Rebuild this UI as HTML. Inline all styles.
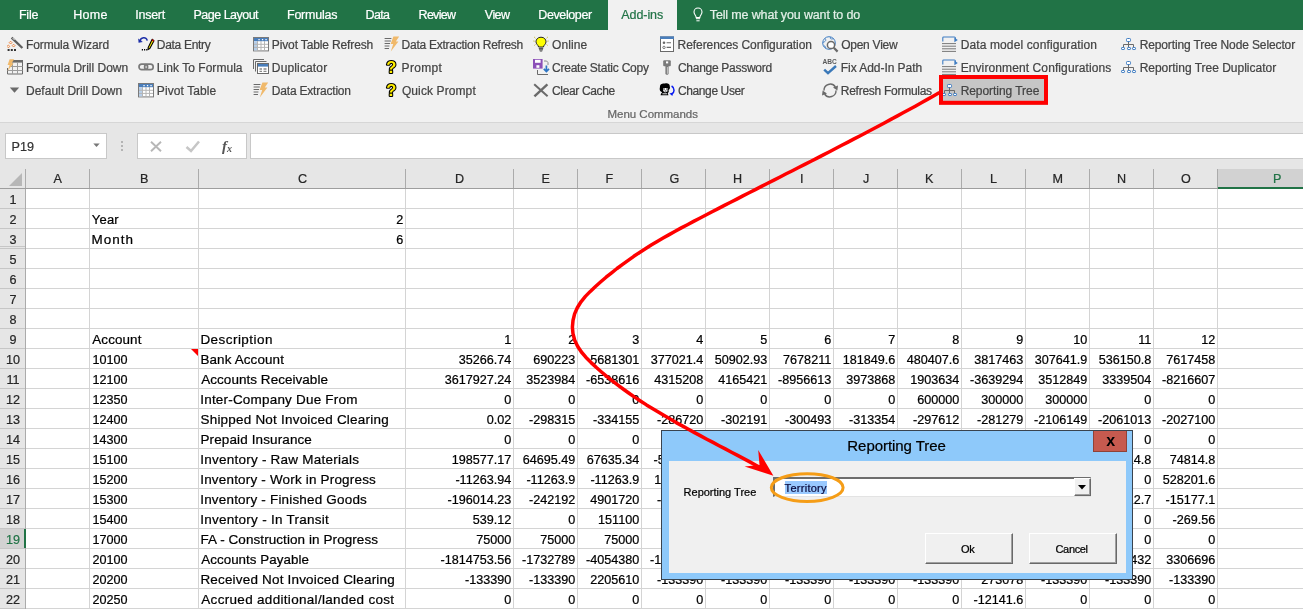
<!DOCTYPE html>
<html><head><meta charset="utf-8"><title>Reporting Tree</title>
<style>
html,body{margin:0;padding:0;background:#fff;}
body{width:1315px;height:609px;overflow:hidden;position:relative;font-family:"Liberation Sans",sans-serif;}
#app{position:absolute;left:0;top:0;width:1303px;height:609px;overflow:hidden;background:#fff;}
#all{position:absolute;left:0;top:0;width:1315px;height:609px;will-change:transform;}
.b{position:absolute;display:block;}
.t{position:absolute;white-space:nowrap;line-height:20px;height:20px;-webkit-text-stroke:0.22px currentColor;}
.btn{background:#f0f0f0;box-sizing:border-box;border-top:1px solid #fff;border-left:1px solid #fff;border-right:1px solid #696969;border-bottom:1px solid #696969;box-shadow:inset -1px -1px 0 0 #a0a0a0;}
.hl{position:absolute;left:938.9px;top:75px;width:109px;height:29.6px;background:#c6c6c6;}
</style></head><body>
<div id="app"><div id="all">
<div class="b" style="left:0px;top:0px;width:1303px;height:30px;background:#217346;"></div>
<div class="b" style="left:608px;top:0px;width:69px;height:30px;background:#f1f1f1;"></div>
<div class="b" style="left:0px;top:30px;width:1303px;height:92px;background:#f1f1f1;"></div>
<div class="b" style="left:0px;top:122px;width:1303px;height:1px;background:#d6d6d6;"></div>
<div class="b" style="left:0px;top:123px;width:1303px;height:66px;background:#e6e6e6;"></div>
<div class="b" style="left:5px;top:133px;width:102px;height:26px;background:#fff;border:1px solid #c8c8c8;box-sizing:border-box;"></div>
<div class="b" style="left:137px;top:133px;width:110px;height:26px;background:#fff;border:1px solid #c8c8c8;box-sizing:border-box;"></div>
<div class="b" style="left:250px;top:133px;width:1060px;height:26px;background:#fff;border:1px solid #c8c8c8;box-sizing:border-box;"></div>
<div class="b" style="left:121px;top:141px;width:2px;height:2px;background:#b4b4b4;"></div>
<div class="b" style="left:121px;top:145px;width:2px;height:2px;background:#b4b4b4;"></div>
<div class="b" style="left:121px;top:149px;width:2px;height:2px;background:#b4b4b4;"></div>
<div class="b" style="left:0px;top:189px;width:1303px;height:420px;background:#fff;"></div>
<div class="b" style="left:0px;top:189px;width:26px;height:420px;background:#e6e6e6;"></div>
<div class="b" style="left:1218px;top:169px;width:85px;height:20px;background:#d2d2d2;"></div>
<div class="b" style="left:0px;top:529px;width:25px;height:19px;background:#d2d2d2;"></div>
<div class="b" style="left:89px;top:189px;width:1px;height:420px;background:#d4d4d4;"></div>
<div class="b" style="left:89px;top:169px;width:1px;height:19px;background:#ababab;"></div>
<div class="b" style="left:198px;top:189px;width:1px;height:420px;background:#d4d4d4;"></div>
<div class="b" style="left:198px;top:169px;width:1px;height:19px;background:#ababab;"></div>
<div class="b" style="left:405px;top:189px;width:1px;height:420px;background:#d4d4d4;"></div>
<div class="b" style="left:405px;top:169px;width:1px;height:19px;background:#ababab;"></div>
<div class="b" style="left:513px;top:189px;width:1px;height:420px;background:#d4d4d4;"></div>
<div class="b" style="left:513px;top:169px;width:1px;height:19px;background:#ababab;"></div>
<div class="b" style="left:577px;top:189px;width:1px;height:420px;background:#d4d4d4;"></div>
<div class="b" style="left:577px;top:169px;width:1px;height:19px;background:#ababab;"></div>
<div class="b" style="left:641px;top:189px;width:1px;height:420px;background:#d4d4d4;"></div>
<div class="b" style="left:641px;top:169px;width:1px;height:19px;background:#ababab;"></div>
<div class="b" style="left:705px;top:189px;width:1px;height:420px;background:#d4d4d4;"></div>
<div class="b" style="left:705px;top:169px;width:1px;height:19px;background:#ababab;"></div>
<div class="b" style="left:769px;top:189px;width:1px;height:420px;background:#d4d4d4;"></div>
<div class="b" style="left:769px;top:169px;width:1px;height:19px;background:#ababab;"></div>
<div class="b" style="left:833px;top:189px;width:1px;height:420px;background:#d4d4d4;"></div>
<div class="b" style="left:833px;top:169px;width:1px;height:19px;background:#ababab;"></div>
<div class="b" style="left:897px;top:189px;width:1px;height:420px;background:#d4d4d4;"></div>
<div class="b" style="left:897px;top:169px;width:1px;height:19px;background:#ababab;"></div>
<div class="b" style="left:961px;top:189px;width:1px;height:420px;background:#d4d4d4;"></div>
<div class="b" style="left:961px;top:169px;width:1px;height:19px;background:#ababab;"></div>
<div class="b" style="left:1025px;top:189px;width:1px;height:420px;background:#d4d4d4;"></div>
<div class="b" style="left:1025px;top:169px;width:1px;height:19px;background:#ababab;"></div>
<div class="b" style="left:1089px;top:189px;width:1px;height:420px;background:#d4d4d4;"></div>
<div class="b" style="left:1089px;top:169px;width:1px;height:19px;background:#ababab;"></div>
<div class="b" style="left:1153px;top:189px;width:1px;height:420px;background:#d4d4d4;"></div>
<div class="b" style="left:1153px;top:169px;width:1px;height:19px;background:#ababab;"></div>
<div class="b" style="left:1217px;top:189px;width:1px;height:420px;background:#d4d4d4;"></div>
<div class="b" style="left:1217px;top:169px;width:1px;height:19px;background:#ababab;"></div>
<div class="b" style="left:26px;top:208px;width:1277px;height:1px;background:#d4d4d4;"></div>
<div class="b" style="left:0px;top:208px;width:25px;height:1px;background:#c6c6c6;"></div>
<div class="b" style="left:26px;top:228px;width:1277px;height:1px;background:#d4d4d4;"></div>
<div class="b" style="left:0px;top:228px;width:25px;height:1px;background:#c6c6c6;"></div>
<div class="b" style="left:26px;top:248px;width:1277px;height:1px;background:#d4d4d4;"></div>
<div class="b" style="left:0px;top:248px;width:25px;height:1px;background:#c6c6c6;"></div>
<div class="b" style="left:26px;top:268px;width:1277px;height:1px;background:#d4d4d4;"></div>
<div class="b" style="left:0px;top:268px;width:25px;height:1px;background:#c6c6c6;"></div>
<div class="b" style="left:26px;top:288px;width:1277px;height:1px;background:#d4d4d4;"></div>
<div class="b" style="left:0px;top:288px;width:25px;height:1px;background:#c6c6c6;"></div>
<div class="b" style="left:26px;top:308px;width:1277px;height:1px;background:#d4d4d4;"></div>
<div class="b" style="left:0px;top:308px;width:25px;height:1px;background:#c6c6c6;"></div>
<div class="b" style="left:26px;top:328px;width:1277px;height:1px;background:#d4d4d4;"></div>
<div class="b" style="left:0px;top:328px;width:25px;height:1px;background:#c6c6c6;"></div>
<div class="b" style="left:26px;top:348px;width:1277px;height:1px;background:#d4d4d4;"></div>
<div class="b" style="left:0px;top:348px;width:25px;height:1px;background:#c6c6c6;"></div>
<div class="b" style="left:26px;top:368px;width:1277px;height:1px;background:#d4d4d4;"></div>
<div class="b" style="left:0px;top:368px;width:25px;height:1px;background:#c6c6c6;"></div>
<div class="b" style="left:26px;top:388px;width:1277px;height:1px;background:#d4d4d4;"></div>
<div class="b" style="left:0px;top:388px;width:25px;height:1px;background:#c6c6c6;"></div>
<div class="b" style="left:26px;top:408px;width:1277px;height:1px;background:#d4d4d4;"></div>
<div class="b" style="left:0px;top:408px;width:25px;height:1px;background:#c6c6c6;"></div>
<div class="b" style="left:26px;top:428px;width:1277px;height:1px;background:#d4d4d4;"></div>
<div class="b" style="left:0px;top:428px;width:25px;height:1px;background:#c6c6c6;"></div>
<div class="b" style="left:26px;top:448px;width:1277px;height:1px;background:#d4d4d4;"></div>
<div class="b" style="left:0px;top:448px;width:25px;height:1px;background:#c6c6c6;"></div>
<div class="b" style="left:26px;top:468px;width:1277px;height:1px;background:#d4d4d4;"></div>
<div class="b" style="left:0px;top:468px;width:25px;height:1px;background:#c6c6c6;"></div>
<div class="b" style="left:26px;top:488px;width:1277px;height:1px;background:#d4d4d4;"></div>
<div class="b" style="left:0px;top:488px;width:25px;height:1px;background:#c6c6c6;"></div>
<div class="b" style="left:26px;top:508px;width:1277px;height:1px;background:#d4d4d4;"></div>
<div class="b" style="left:0px;top:508px;width:25px;height:1px;background:#c6c6c6;"></div>
<div class="b" style="left:26px;top:528px;width:1277px;height:1px;background:#d4d4d4;"></div>
<div class="b" style="left:0px;top:528px;width:25px;height:1px;background:#c6c6c6;"></div>
<div class="b" style="left:26px;top:548px;width:1277px;height:1px;background:#d4d4d4;"></div>
<div class="b" style="left:0px;top:548px;width:25px;height:1px;background:#c6c6c6;"></div>
<div class="b" style="left:26px;top:568px;width:1277px;height:1px;background:#d4d4d4;"></div>
<div class="b" style="left:0px;top:568px;width:25px;height:1px;background:#c6c6c6;"></div>
<div class="b" style="left:26px;top:588px;width:1277px;height:1px;background:#d4d4d4;"></div>
<div class="b" style="left:0px;top:588px;width:25px;height:1px;background:#c6c6c6;"></div>
<div class="b" style="left:26px;top:608px;width:1277px;height:1px;background:#d4d4d4;"></div>
<div class="b" style="left:0px;top:608px;width:25px;height:1px;background:#c6c6c6;"></div>
<div class="b" style="left:0px;top:246px;width:25px;height:1px;background:#c6c6c6;"></div>
<div class="b" style="left:25px;top:169px;width:1px;height:20px;background:#ababab;"></div>
<div class="b" style="left:25px;top:189px;width:1px;height:420px;background:#ababab;"></div>
<div class="b" style="left:0px;top:188px;width:1303px;height:1px;background:#9e9e9e;"></div>
<div class="b" style="left:1218px;top:187px;width:85px;height:2px;background:#217346;"></div>
<div class="b" style="left:24px;top:529px;width:2px;height:19px;background:#217346;"></div>
<svg class="b" style="left:8px;top:172px" width="16" height="16"><path d="M14 1 L14 14 L1 14 Z" fill="#b7b7b7"/></svg>
<svg class="b" style="left:191px;top:349px" width="7" height="7"><path d="M0 0 L7 0 L7 7 Z" fill="#ff0000"/></svg>
<svg class="b" style="left:93px;top:143px" width="8" height="5"><path d="M0.3 0.5 L6.7 0.5 L3.5 4 Z" fill="#777"/></svg>
<svg class="b" style="left:137px;top:133px" width="110" height="26" fill="none">
<path d="M14 8.7 L24 18.3 M24 8.7 L14 18.3" stroke="#b7b7b7" stroke-width="1.9"/>
<path d="M49.5 14 L54 18 L62 8.5" stroke="#c6c6c6" stroke-width="2.5"/>
<text x="85" y="18" font-family="Liberation Serif, serif" font-style="italic" font-size="15" fill="#555" font-weight="bold">f</text>
<text x="90" y="18.5" font-family="Liberation Serif, serif" font-style="italic" font-size="10" fill="#555" font-weight="bold">x</text>
</svg>
<div class="hl"></div>
<svg class="b" style="left:7px;top:36px" width="17" height="17" viewBox="0 0 17 17" fill="none"><path d="M4.6 1.6 L15.4 12" stroke="#5e5e5e" stroke-width="2.3" stroke-linecap="butt"/>
<path d="M5.6 2.0 L7.6 4.0" stroke="#fff" stroke-width="0.9"/>
<path d="M3.6 5.2 L5 6.6 L3.6 8 L2.2 6.6 Z M1.4 9 L2.8 10.4 L1.4 11.8 L0 10.4 Z M6.6 8.2 L8 9.6 L6.6 11 L5.2 9.6 Z" stroke="#ed7d31" stroke-width="0.9"/>
<path d="M0.6 13 h2 v2 h-2 z M3.8 13 h2 v2 h-2 z M7 13 h2 v2 h-2 z" fill="#333"/></svg>
<svg class="b" style="left:7px;top:59px" width="17" height="17" viewBox="0 0 17 17" fill="none"><path d="M5.5 1.5 H15.5 V15 H0.5 V9" stroke="#6a6a6a" stroke-width="1"/>
<path d="M5 1 H16 V3.6 H5 Z" fill="#6a6a6a"/>
<path d="M5.5 3.5 V15 M10.5 3.5 V15 M3 7.5 H15.5 M0.5 11.5 H15.5" stroke="#9a9a9a" stroke-width="1"/>
<path d="M2.6 0.2 L7.2 0.2 L4.6 4.2 L6.6 4.2 L0.6 12 L2.6 6 L0.6 6 Z" fill="#f0b96b"/></svg>
<svg class="b" style="left:7px;top:82px" width="17" height="17" viewBox="0 0 17 17" fill="none"><path d="M2.8 5.4 L12.2 5.4 L7.5 10.8 Z" fill="#6a6a6a"/></svg>
<svg class="b" style="left:138px;top:36px" width="17" height="17" viewBox="0 0 17 17" fill="none"><path d="M2.2 5.2 C2.2 1.2, 8.8 0.4, 9.2 4.6" stroke="#1c2ea8" stroke-width="1.5"/>
<path d="M0.2 2.6 L0.6 6.8 L4.8 6 Z" fill="#1c2ea8"/>
<path d="M14.2 3.2 L16 4.8 L11.8 12.6 L10 13.6 L10.2 11.4 Z" fill="#ffee00" stroke="#000" stroke-width="1.1" stroke-linejoin="round"/>
<path d="M14.4 3 L16.2 4.6 L15.6 5.8 L13.8 4.2 Z" fill="#c00000"/>
<path d="M3.8 13 h1.2 v1.4 h-1.2 z M6 13 h1.2 v1.4 h-1.2 z M8.2 13 h1.2 v1.4 h-1.2 z" fill="#000"/></svg>
<svg class="b" style="left:138px;top:59px" width="17" height="17" viewBox="0 0 17 17" fill="none"><rect x="1" y="5.2" width="8.6" height="5.4" rx="2.7" stroke="#7a7a7a" stroke-width="1.7"/>
<rect x="6.6" y="5.2" width="8.6" height="5.4" rx="2.7" stroke="#7a7a7a" stroke-width="1.7"/></svg>
<svg class="b" style="left:138px;top:82px" width="17" height="17" viewBox="0 0 17 17" fill="none"><rect x="0.5" y="1.5" width="15" height="13.4" fill="#fff" stroke="#7a7a7a" stroke-width="1"/>
<rect x="1" y="2" width="14" height="3.2" fill="#4a7ebb"/>
<rect x="1" y="5.2" width="3" height="9.2" fill="#b7cfea"/>
<path d="M4.5 5 V14.5 M8 5 V14.5 M11.5 5 V14.5 M1 8.3 H15 M1 11.4 H15" stroke="#b5b5b5" stroke-width="1"/>
<path d="M5.4 3 h1.3 v1.2 h-1.3 z M8.9 3 h1.3 v1.2 h-1.3 z M12.4 3 h1.3 v1.2 h-1.3 z" fill="#fff"/></svg>
<svg class="b" style="left:253px;top:36px" width="17" height="17" viewBox="0 0 17 17" fill="none"><rect x="0.5" y="1.5" width="15" height="13.4" fill="#fff" stroke="#7a7a7a" stroke-width="1"/>
<rect x="1" y="2" width="14" height="3.2" fill="#4a7ebb"/>
<rect x="1" y="5.2" width="3" height="9.2" fill="#b7cfea"/>
<path d="M4.5 5 V14.5 M8 5 V14.5 M11.5 5 V14.5 M1 8.3 H15 M1 11.4 H15" stroke="#b5b5b5" stroke-width="1"/>
<path d="M5.4 3 h1.3 v1.2 h-1.3 z M8.9 3 h1.3 v1.2 h-1.3 z M12.4 3 h1.3 v1.2 h-1.3 z" fill="#fff"/></svg>
<svg class="b" style="left:253px;top:59px" width="17" height="17" viewBox="0 0 17 17" fill="none"><path d="M0.5 10 V0.5 H11" stroke="#6a6a6a" stroke-width="1"/>
<path d="M2.5 12.5 V2.5 H13.5" stroke="#6a6a6a" stroke-width="1"/>
<rect x="4.5" y="4.5" width="11" height="10" fill="#fff" stroke="#6a6a6a" stroke-width="1"/>
<rect x="5" y="5" width="10" height="2.6" fill="#4a7ebb"/>
<path d="M6.5 10 H9 M10.5 10 H13.5 M6.5 12.4 H9 M10.5 12.4 H13.5" stroke="#8a8a8a" stroke-width="1.3"/></svg>
<svg class="b" style="left:253px;top:82px" width="17" height="17" viewBox="0 0 17 17" fill="none"><path d="M0.6 2.5 H7.4 M0.6 5 H6.8 M0.6 7.5 H6 M0.6 10 H5.4 M0.6 12.5 H5" stroke="#6a6a6a" stroke-width="1"/>
<path d="M9.4 0.4 L15.2 0.4 L11.8 5.6 L14.4 5.6 L6.8 15.4 L9.2 8 L6.6 8 Z" fill="#f0b96b"/></svg>
<svg class="b" style="left:384px;top:36px" width="17" height="17" viewBox="0 0 17 17" fill="none"><path d="M0.6 2.5 H7.4 M0.6 5 H6.8 M0.6 7.5 H6 M0.6 10 H5.4 M0.6 12.5 H5" stroke="#6a6a6a" stroke-width="1"/>
<path d="M9.4 0.4 L15.2 0.4 L11.8 5.6 L14.4 5.6 L6.8 15.4 L9.2 8 L6.6 8 Z" fill="#f0b96b"/></svg>
<svg class="b" style="left:384px;top:59px" width="17" height="17" viewBox="0 0 17 17" fill="none"><text x="7.2" y="14" font-family="Liberation Sans, sans-serif" font-weight="bold" font-size="16.5" text-anchor="middle" fill="#ffee00" stroke="#000" stroke-width="2.2" paint-order="stroke" stroke-linejoin="round">?</text></svg>
<svg class="b" style="left:384px;top:82px" width="17" height="17" viewBox="0 0 17 17" fill="none"><text x="7.2" y="14" font-family="Liberation Sans, sans-serif" font-weight="bold" font-size="16.5" text-anchor="middle" fill="#ffee00" stroke="#000" stroke-width="2.2" paint-order="stroke" stroke-linejoin="round">?</text></svg>
<svg class="b" style="left:533px;top:36px" width="17" height="17" viewBox="0 0 17 17" fill="none"><path d="M8 1.2 C4.6 1.2, 3 3.6, 3 5.8 C3 8, 5.2 9, 5.6 11 H10.4 C10.8 9, 13 8, 13 5.8 C13 3.6, 11.4 1.2, 8 1.2 Z" fill="#ffff00" stroke="#222" stroke-width="1"/>
<path d="M5.8 12.4 H10.2 M6 13.8 H10 M6.8 15 H9.2" stroke="#444" stroke-width="1"/>
<path d="M1.2 1 L2.4 2.2 M14.8 1 L13.6 2.2 M0.4 5 L1.6 5.2 M15.6 5 L14.4 5.2 M1.4 9.4 L2.4 8.6 M14.6 9.4 L13.6 8.6" stroke="#b8a800" stroke-width="0.8"/></svg>
<svg class="b" style="left:533px;top:59px" width="17" height="17" viewBox="0 0 17 17" fill="none"><rect x="0" y="0" width="9.6" height="9.6" fill="#8c50b8"/>
<rect x="2" y="0.8" width="5.6" height="3" fill="#fff"/>
<rect x="3.4" y="6.2" width="3" height="2.6" fill="#fff"/>
<path d="M11 2 L13.6 2 L15 3.6 V6" stroke="#8a8a8a" stroke-width="1"/>
<path d="M4.5 11 V15.5 H15" stroke="#6a6a6a" stroke-width="1"/>
<path d="M13.4 6.4 V12 M10.8 9.8 L13.4 12.6 L16 9.8" stroke="#2e75c4" stroke-width="1.7"/></svg>
<svg class="b" style="left:533px;top:82px" width="17" height="17" viewBox="0 0 17 17" fill="none"><path d="M1.2 2.2 L14.6 14.2" stroke="#6a6a6a" stroke-width="2"/><path d="M14.4 2.4 L1.4 14.4" stroke="#6a6a6a" stroke-width="2.4"/></svg>
<svg class="b" style="left:659px;top:36px" width="17" height="17" viewBox="0 0 17 17" fill="none"><rect x="1.5" y="1" width="13" height="14.5" fill="#fff" stroke="#6a6a6a" stroke-width="1"/>
<rect x="1" y="0.4" width="14" height="2.6" fill="#4a7ebb"/>
<circle cx="5" cy="6.8" r="1.3" fill="#6a6a6a"/><circle cx="5" cy="11.4" r="1.2" stroke="#6a6a6a" stroke-width="0.9"/>
<path d="M7.6 6.8 H12 M7.6 11.4 H12" stroke="#6a6a6a" stroke-width="1.1"/></svg>
<svg class="b" style="left:659px;top:59px" width="17" height="17" viewBox="0 0 17 17" fill="none"><rect x="4.2" y="1.2" width="7.6" height="6" rx="1" fill="#7a7a7a"/>
<rect x="7" y="2.4" width="2.2" height="2" fill="#fff"/>
<path d="M6.4 7 H9.6 V15 L8 16 L6.4 15 Z" fill="#7a7a7a"/>
<path d="M8.4 8 V14.8" stroke="#d8d8d8" stroke-width="0.8"/></svg>
<svg class="b" style="left:659px;top:82px" width="17" height="17" viewBox="0 0 17 17" fill="none"><path d="M1 5 C0.6 2, 4 1, 6 1.6 C8 0.6, 11 2, 10.8 4.4 C11.4 6, 10.4 7.4, 9.6 8 L9.8 10 C8 11, 9.6 12.6, 9.4 13.2 L1.6 13.2 C1.8 11.4, 3 11, 3 10 C0.6 9.4, 0.4 7, 1 5 Z" fill="#000"/>
<path d="M4.4 6 L8.6 6 L8.4 9.6 L6 10.6 L4.2 9 Z" fill="#fff"/>
<path d="M4.6 7 H6 M7 7 H8.4 M5.6 9 H7.4" stroke="#000" stroke-width="0.8"/>
<path d="M3.4 11.8 H8.2" stroke="#fff" stroke-width="0.9"/>
<path d="M12.6 4 C16 6, 15.6 10.4, 12.8 12" stroke="#0a1cf0" stroke-width="1.5"/>
<path d="M10.4 11.4 L14 10.6 L13.4 14 Z" fill="#0a1cf0"/></svg>
<svg class="b" style="left:822px;top:36px" width="17" height="17" viewBox="0 0 17 17" fill="none"><circle cx="7" cy="7" r="6.3" stroke="#3e7cc2" stroke-width="1"/>
<path d="M3 2.4 C4.4 4, 4 5.4, 1 6.4 M8.6 1 C7.4 3, 9.6 3.4, 11.6 2.6 M1.6 10 C3 9.6, 3.6 10.6, 3.8 12.4" stroke="#3e7cc2" stroke-width="0.9"/>
<circle cx="9" cy="9" r="3.6" fill="#fff" stroke="#6a6a6a" stroke-width="1.5"/>
<path d="M11.8 11.8 L15.6 15.6" stroke="#6a6a6a" stroke-width="2.2"/></svg>
<svg class="b" style="left:822px;top:59px" width="17" height="17" viewBox="0 0 17 17" fill="none"><text x="7.6" y="4.9" font-family="Liberation Sans, sans-serif" font-weight="bold" font-size="6.6" text-anchor="middle" fill="#5a5a5a" letter-spacing="-0.1">ABC</text>
<path d="M2.2 10.6 L6 14.2 L14 7" stroke="#3a78b8" stroke-width="2.4"/></svg>
<svg class="b" style="left:822px;top:82px" width="17" height="17" viewBox="0 0 17 17" fill="none"><path d="M2 8.6 A6.2 6.2 0 0 1 13.4 5" stroke="#6a6a6a" stroke-width="1.4"/>
<path d="M14 8.4 A6.2 6.2 0 0 1 2.6 12" stroke="#6a6a6a" stroke-width="1.4"/>
<path d="M11 5.6 L16 3.6 L15.4 8.6 Z" fill="#6a6a6a"/>
<path d="M5 11.4 L0 13.4 L0.6 8.4 Z" fill="#6a6a6a"/></svg>
<svg class="b" style="left:942px;top:36px" width="17" height="17" viewBox="0 0 17 17" fill="none"><path d="M0.8 5.4 V1.8 C0.8 1.2,1 1,1.6 1 H12.4 C13.2 1,13.4 1.4,13.4 2 V3.4" stroke="#3e7cc2" stroke-width="1.1"/>
<path d="M12.4 1.8 L15.8 4 L12.4 6.2 Z" fill="#3e7cc2"/>
<path d="M0 7.6 H14 M0 10.2 H14 M0 12.8 H14 M0 15.4 H14" stroke="#6a6a6a" stroke-width="0.9"/></svg>
<svg class="b" style="left:942px;top:59px" width="17" height="17" viewBox="0 0 17 17" fill="none"><path d="M0.8 5.4 V1.8 C0.8 1.2,1 1,1.6 1 H12.4 C13.2 1,13.4 1.4,13.4 2 V3.4" stroke="#3e7cc2" stroke-width="1.1"/>
<path d="M12.4 1.8 L15.8 4 L12.4 6.2 Z" fill="#3e7cc2"/>
<path d="M0 7.6 H14 M0 10.2 H14 M0 12.8 H14 M0 15.4 H14" stroke="#6a6a6a" stroke-width="0.9"/></svg>
<svg class="b" style="left:942px;top:82px" width="17" height="17" viewBox="0 0 17 17" fill="none"><path d="M7.5 6 V11 M2.5 11 V8.5 H12.5 V11" stroke="#6a6a6a" stroke-width="1"/>
<rect x="5.5" y="2.5" width="4" height="3" rx="0.8" fill="#fff" stroke="#3e7cc2" stroke-width="1"/>
<rect x="0.5" y="11.5" width="3" height="2" rx="0.6" fill="#fff" stroke="#3e7cc2" stroke-width="1"/>
<rect x="6.5" y="11.5" width="3" height="2" rx="0.6" fill="#fff" stroke="#3e7cc2" stroke-width="1"/>
<rect x="11.5" y="11.5" width="3" height="2" rx="0.6" fill="#fff" stroke="#3e7cc2" stroke-width="1"/></svg>
<svg class="b" style="left:1121px;top:36px" width="17" height="17" viewBox="0 0 17 17" fill="none"><path d="M7.5 6 V11 M2.5 11 V8.5 H12.5 V11" stroke="#6a6a6a" stroke-width="1"/>
<rect x="5.5" y="2.5" width="4" height="3" rx="0.8" fill="#fff" stroke="#3e7cc2" stroke-width="1"/>
<rect x="0.5" y="11.5" width="3" height="2" rx="0.6" fill="#fff" stroke="#3e7cc2" stroke-width="1"/>
<rect x="6.5" y="11.5" width="3" height="2" rx="0.6" fill="#fff" stroke="#3e7cc2" stroke-width="1"/>
<rect x="11.5" y="11.5" width="3" height="2" rx="0.6" fill="#fff" stroke="#3e7cc2" stroke-width="1"/></svg>
<svg class="b" style="left:1121px;top:59px" width="17" height="17" viewBox="0 0 17 17" fill="none"><path d="M7.5 6 V11 M2.5 11 V8.5 H12.5 V11" stroke="#6a6a6a" stroke-width="1"/>
<rect x="5.5" y="2.5" width="4" height="3" rx="0.8" fill="#fff" stroke="#3e7cc2" stroke-width="1"/>
<rect x="0.5" y="11.5" width="3" height="2" rx="0.6" fill="#fff" stroke="#3e7cc2" stroke-width="1"/>
<rect x="6.5" y="11.5" width="3" height="2" rx="0.6" fill="#fff" stroke="#3e7cc2" stroke-width="1"/>
<rect x="11.5" y="11.5" width="3" height="2" rx="0.6" fill="#fff" stroke="#3e7cc2" stroke-width="1"/></svg>
<svg class="b" style="left:692.6px;top:6.6px" width="10" height="15" viewBox="0 0 10 15" fill="none"><path d="M5 1 C2.4 1, 1 3, 1 5 C1 7.4, 3 8.4, 3.2 10.6 H6.8 C7 8.4, 9 7.4, 9 5 C9 3, 7.6 1, 5 1 Z" stroke="#fff" stroke-width="1.1"/>
<path d="M3 11.2 H7 V12.2 H3 Z" fill="#fff"/><path d="M3.4 13.8 H6.6" stroke="#fff" stroke-width="1"/></svg>
<span class="t" style="top:5.00px;font-size:12.5px;color:#ffffff;left:19.00px;letter-spacing:-0.264px;">File</span><span class="t" style="top:5.00px;font-size:12.5px;color:#ffffff;left:73.29px;letter-spacing:0.238px;">Home</span><span class="t" style="top:5.00px;font-size:12.5px;color:#ffffff;left:135.37px;letter-spacing:-0.302px;">Insert</span><span class="t" style="top:5.00px;font-size:12.5px;color:#ffffff;left:193.56px;letter-spacing:-0.516px;">Page Layout</span><span class="t" style="top:5.00px;font-size:12.5px;color:#ffffff;left:287.00px;letter-spacing:-0.238px;">Formulas</span><span class="t" style="top:5.00px;font-size:12.5px;color:#ffffff;left:365.59px;letter-spacing:-0.708px;">Data</span><span class="t" style="top:5.00px;font-size:12.5px;color:#ffffff;left:418.59px;letter-spacing:-0.719px;">Review</span><span class="t" style="top:5.00px;font-size:12.5px;color:#ffffff;left:484.87px;letter-spacing:-0.588px;">View</span><span class="t" style="top:5.00px;font-size:12.5px;color:#ffffff;left:538.29px;letter-spacing:-0.388px;">Developer</span><span class="t" style="top:5.00px;font-size:12.5px;color:#217346;left:621.33px;letter-spacing:-0.084px;">Add-ins</span><span class="t" style="top:5.00px;font-size:12.5px;color:#e3f0e8;left:709.83px;letter-spacing:-0.147px;">Tell me what you want to do</span><span class="t" style="top:35.00px;font-size:12px;color:#444444;left:26.03px;letter-spacing:-0.126px;">Formula Wizard</span><span class="t" style="top:58.00px;font-size:12px;color:#444444;left:26.03px;letter-spacing:0.011px;">Formula Drill Down</span><span class="t" style="top:81.00px;font-size:12px;color:#444444;left:26.03px;letter-spacing:0.009px;">Default Drill Down</span><span class="t" style="top:35.00px;font-size:12px;color:#444444;left:156.87px;letter-spacing:-0.311px;">Data Entry</span><span class="t" style="top:58.00px;font-size:12px;color:#444444;left:156.87px;letter-spacing:0.036px;">Link To Formula</span><span class="t" style="top:81.00px;font-size:12px;color:#444444;left:156.87px;letter-spacing:0.094px;">Pivot Table</span><span class="t" style="top:35.00px;font-size:12px;color:#444444;left:271.87px;letter-spacing:-0.137px;">Pivot Table Refresh</span><span class="t" style="top:58.00px;font-size:12px;color:#444444;left:271.87px;letter-spacing:0.138px;">Duplicator</span><span class="t" style="top:81.00px;font-size:12px;color:#444444;left:271.87px;letter-spacing:-0.207px;">Data Extraction</span><span class="t" style="top:35.00px;font-size:12px;color:#444444;left:401.60px;letter-spacing:-0.261px;">Data Extraction Refresh</span><span class="t" style="top:58.00px;font-size:12px;color:#444444;left:401.60px;letter-spacing:0.290px;">Prompt</span><span class="t" style="top:81.00px;font-size:12px;color:#444444;left:401.91px;letter-spacing:0.103px;">Quick Prompt</span><span class="t" style="top:35.00px;font-size:12px;color:#444444;left:551.94px;letter-spacing:0.104px;">Online</span><span class="t" style="top:58.00px;font-size:12px;color:#444444;left:551.99px;letter-spacing:-0.218px;">Create Static Copy</span><span class="t" style="top:81.00px;font-size:12px;color:#444444;left:551.99px;letter-spacing:-0.339px;">Clear Cache</span><span class="t" style="top:35.00px;font-size:12px;color:#444444;left:677.60px;letter-spacing:-0.074px;">References Configuration</span><span class="t" style="top:58.00px;font-size:12px;color:#444444;left:677.97px;letter-spacing:-0.281px;">Change Password</span><span class="t" style="top:81.00px;font-size:12px;color:#444444;left:677.97px;letter-spacing:-0.388px;">Change User</span><span class="t" style="top:35.00px;font-size:12px;color:#444444;left:841.23px;letter-spacing:-0.261px;">Open View</span><span class="t" style="top:58.00px;font-size:12px;color:#444444;left:840.81px;letter-spacing:-0.051px;">Fix Add-In Path</span><span class="t" style="top:81.00px;font-size:12px;color:#444444;left:840.81px;letter-spacing:-0.271px;">Refresh Formulas</span><span class="t" style="top:35.00px;font-size:12px;color:#444444;left:960.63px;letter-spacing:0.128px;">Data model configuration</span><span class="t" style="top:58.00px;font-size:12px;color:#444444;left:960.63px;letter-spacing:0.105px;">Environment Configurations</span><span class="t" style="top:81.00px;font-size:12px;color:#444444;left:960.63px;letter-spacing:-0.051px;">Reporting Tree</span><span class="t" style="top:35.00px;font-size:12px;color:#444444;left:1139.63px;letter-spacing:-0.120px;">Reporting Tree Node Selector</span><span class="t" style="top:58.00px;font-size:12px;color:#444444;left:1139.63px;letter-spacing:-0.009px;">Reporting Tree Duplicator</span><span class="t" style="top:103.50px;font-size:11.5px;color:#666666;left:607.56px;letter-spacing:-0.030px;">Menu Commands</span><span class="t" style="top:137.00px;font-size:12.6px;color:#333;left:11.56px;letter-spacing:0.007px;">P19</span><span class="t" style="top:169.00px;font-size:12.6px;color:#262626;left:53.50px;">A</span><span class="t" style="top:169.00px;font-size:12.6px;color:#262626;left:140.00px;">B</span><span class="t" style="top:169.00px;font-size:12.6px;color:#262626;left:298.00px;">C</span><span class="t" style="top:169.00px;font-size:12.6px;color:#262626;left:455.00px;">D</span><span class="t" style="top:169.00px;font-size:12.6px;color:#262626;left:541.50px;">E</span><span class="t" style="top:169.00px;font-size:12.6px;color:#262626;left:605.50px;">F</span><span class="t" style="top:169.00px;font-size:12.6px;color:#262626;left:669.50px;">G</span><span class="t" style="top:169.00px;font-size:12.6px;color:#262626;left:733.00px;">H</span><span class="t" style="top:169.00px;font-size:12.6px;color:#262626;left:800.00px;">I</span><span class="t" style="top:169.00px;font-size:12.6px;color:#262626;left:863.00px;">J</span><span class="t" style="top:169.00px;font-size:12.6px;color:#262626;left:925.00px;">K</span><span class="t" style="top:169.00px;font-size:12.6px;color:#262626;left:990.00px;">L</span><span class="t" style="top:169.00px;font-size:12.6px;color:#262626;left:1052.50px;">M</span><span class="t" style="top:169.00px;font-size:12.6px;color:#262626;left:1117.00px;">N</span><span class="t" style="top:169.00px;font-size:12.6px;color:#262626;left:1181.00px;">O</span><span class="t" style="top:169.00px;font-size:12.6px;color:#217346;left:1273.00px;">P</span><span class="t" style="top:190.00px;font-size:12.6px;color:#262626;left:9.50px;">1</span><span class="t" style="top:210.00px;font-size:12.6px;color:#262626;left:9.50px;">2</span><span class="t" style="top:230.00px;font-size:12.6px;color:#262626;left:9.50px;">3</span><span class="t" style="top:250.00px;font-size:12.6px;color:#262626;left:9.50px;">5</span><span class="t" style="top:270.00px;font-size:12.6px;color:#262626;left:9.50px;">6</span><span class="t" style="top:290.00px;font-size:12.6px;color:#262626;left:9.50px;">7</span><span class="t" style="top:310.00px;font-size:12.6px;color:#262626;left:9.50px;">8</span><span class="t" style="top:330.00px;font-size:12.6px;color:#262626;left:9.50px;">9</span><span class="t" style="top:350.00px;font-size:12.6px;color:#262626;left:6.00px;">10</span><span class="t" style="top:370.00px;font-size:12.6px;color:#262626;left:6.47px;">11</span><span class="t" style="top:390.00px;font-size:12.6px;color:#262626;left:6.00px;">12</span><span class="t" style="top:410.00px;font-size:12.6px;color:#262626;left:6.00px;">13</span><span class="t" style="top:430.00px;font-size:12.6px;color:#262626;left:6.00px;">14</span><span class="t" style="top:450.00px;font-size:12.6px;color:#262626;left:6.00px;">15</span><span class="t" style="top:470.00px;font-size:12.6px;color:#262626;left:6.00px;">16</span><span class="t" style="top:490.00px;font-size:12.6px;color:#262626;left:6.00px;">17</span><span class="t" style="top:510.00px;font-size:12.6px;color:#262626;left:6.00px;">18</span><span class="t" style="top:530.00px;font-size:12.6px;color:#217346;left:6.00px;">19</span><span class="t" style="top:550.00px;font-size:12.6px;color:#262626;left:6.00px;">20</span><span class="t" style="top:570.00px;font-size:12.6px;color:#262626;left:6.00px;">21</span><span class="t" style="top:590.00px;font-size:12.6px;color:#262626;left:6.00px;">22</span><span class="t" style="top:209.50px;font-size:13.02px;color:#000000;left:91.85px;letter-spacing:0.170px;">Year</span><span class="t" style="top:229.50px;font-size:13.48px;color:#000000;left:91.41px;letter-spacing:1.065px;">Month</span><span class="t" style="top:210.00px;font-size:12.6px;color:#000000;right:911.80px;">2</span><span class="t" style="top:230.00px;font-size:12.6px;color:#000000;right:911.80px;">6</span><span class="t" style="top:329.50px;font-size:13.39px;color:#000000;left:92.27px;letter-spacing:0.131px;">Account</span><span class="t" style="top:329.50px;font-size:13.48px;color:#000000;left:200.41px;letter-spacing:0.462px;">Description</span><span class="t" style="top:350.00px;font-size:12.6px;color:#000000;left:92.60px;">10100</span><span class="t" style="top:349.50px;font-size:13.43px;color:#000000;left:200.47px;letter-spacing:0.119px;">Bank Account</span><span class="t" style="top:370.00px;font-size:12.6px;color:#000000;left:92.60px;">12100</span><span class="t" style="top:369.50px;font-size:13.48px;color:#000000;left:201.27px;letter-spacing:0.049px;">Accounts Receivable</span><span class="t" style="top:390.00px;font-size:12.6px;color:#000000;left:92.60px;">12350</span><span class="t" style="top:389.50px;font-size:13.48px;color:#000000;left:200.24px;letter-spacing:0.211px;">Inter-Company Due From</span><span class="t" style="top:410.00px;font-size:12.6px;color:#000000;left:92.60px;">12400</span><span class="t" style="top:409.50px;font-size:13.48px;color:#000000;left:200.47px;letter-spacing:0.222px;">Shipped Not Invoiced Clearing</span><span class="t" style="top:430.00px;font-size:12.6px;color:#000000;left:92.60px;">14300</span><span class="t" style="top:429.50px;font-size:13.48px;color:#000000;left:200.41px;letter-spacing:0.134px;">Prepaid Insurance</span><span class="t" style="top:450.00px;font-size:12.6px;color:#000000;left:92.60px;">15100</span><span class="t" style="top:449.50px;font-size:13.48px;color:#000000;left:200.24px;letter-spacing:0.250px;">Inventory - Raw Materials</span><span class="t" style="top:470.00px;font-size:12.6px;color:#000000;left:92.60px;">15200</span><span class="t" style="top:469.50px;font-size:13.48px;color:#000000;left:200.24px;letter-spacing:0.191px;">Inventory - Work in Progress</span><span class="t" style="top:490.00px;font-size:12.6px;color:#000000;left:92.60px;">15300</span><span class="t" style="top:489.50px;font-size:13.48px;color:#000000;left:200.24px;letter-spacing:0.196px;">Inventory - Finished Goods</span><span class="t" style="top:510.00px;font-size:12.6px;color:#000000;left:92.60px;">15400</span><span class="t" style="top:509.50px;font-size:13.48px;color:#000000;left:200.24px;letter-spacing:0.275px;">Inventory - In Transit</span><span class="t" style="top:530.00px;font-size:12.6px;color:#000000;left:92.60px;">17000</span><span class="t" style="top:529.50px;font-size:13.48px;color:#000000;left:200.41px;letter-spacing:0.087px;">FA - Construction in Progress</span><span class="t" style="top:550.00px;font-size:12.6px;color:#000000;left:92.60px;">20100</span><span class="t" style="top:549.50px;font-size:13.35px;color:#000000;left:201.27px;letter-spacing:0.049px;">Accounts Payable</span><span class="t" style="top:570.00px;font-size:12.6px;color:#000000;left:92.60px;">20200</span><span class="t" style="top:569.50px;font-size:13.48px;color:#000000;left:200.41px;letter-spacing:0.194px;">Received Not Invoiced Clearing</span><span class="t" style="top:590.00px;font-size:12.6px;color:#000000;left:92.60px;">20250</span><span class="t" style="top:589.50px;font-size:13.48px;color:#000000;left:201.27px;letter-spacing:0.324px;">Accrued additional/landed cost</span><span class="t" style="top:330.00px;font-size:12.6px;color:#000000;right:803.80px;">1</span><span class="t" style="top:330.00px;font-size:12.6px;color:#000000;right:739.80px;">2</span><span class="t" style="top:330.00px;font-size:12.6px;color:#000000;right:675.80px;">3</span><span class="t" style="top:330.00px;font-size:12.6px;color:#000000;right:611.80px;">4</span><span class="t" style="top:330.00px;font-size:12.6px;color:#000000;right:547.80px;">5</span><span class="t" style="top:330.00px;font-size:12.6px;color:#000000;right:483.80px;">6</span><span class="t" style="top:330.00px;font-size:12.6px;color:#000000;right:419.80px;">7</span><span class="t" style="top:330.00px;font-size:12.6px;color:#000000;right:355.80px;">8</span><span class="t" style="top:330.00px;font-size:12.6px;color:#000000;right:291.80px;">9</span><span class="t" style="top:330.00px;font-size:12.6px;color:#000000;right:227.80px;">10</span><span class="t" style="top:330.00px;font-size:12.6px;color:#000000;right:163.80px;">11</span><span class="t" style="top:330.00px;font-size:12.6px;color:#000000;right:99.80px;">12</span><span class="t" style="top:350.00px;font-size:12.6px;color:#000000;right:803.80px;">35266.74</span><span class="t" style="top:350.00px;font-size:12.6px;color:#000000;right:739.80px;">690223</span><span class="t" style="top:350.00px;font-size:12.6px;color:#000000;right:675.80px;">5681301</span><span class="t" style="top:350.00px;font-size:12.6px;color:#000000;right:611.80px;">377021.4</span><span class="t" style="top:350.00px;font-size:12.6px;color:#000000;right:547.80px;">50902.93</span><span class="t" style="top:350.00px;font-size:12.6px;color:#000000;right:483.80px;">7678211</span><span class="t" style="top:350.00px;font-size:12.6px;color:#000000;right:419.80px;">181849.6</span><span class="t" style="top:350.00px;font-size:12.6px;color:#000000;right:355.80px;">480407.6</span><span class="t" style="top:350.00px;font-size:12.6px;color:#000000;right:291.80px;">3817463</span><span class="t" style="top:350.00px;font-size:12.6px;color:#000000;right:227.80px;">307641.9</span><span class="t" style="top:350.00px;font-size:12.6px;color:#000000;right:163.80px;">536150.8</span><span class="t" style="top:350.00px;font-size:12.6px;color:#000000;right:99.80px;">7617458</span><span class="t" style="top:370.00px;font-size:12.6px;color:#000000;right:803.80px;">3617927.24</span><span class="t" style="top:370.00px;font-size:12.6px;color:#000000;right:739.80px;">3523984</span><span class="t" style="top:370.00px;font-size:12.6px;color:#000000;right:675.80px;">-6538616</span><span class="t" style="top:370.00px;font-size:12.6px;color:#000000;right:611.80px;">4315208</span><span class="t" style="top:370.00px;font-size:12.6px;color:#000000;right:547.80px;">4165421</span><span class="t" style="top:370.00px;font-size:12.6px;color:#000000;right:483.80px;">-8956613</span><span class="t" style="top:370.00px;font-size:12.6px;color:#000000;right:419.80px;">3973868</span><span class="t" style="top:370.00px;font-size:12.6px;color:#000000;right:355.80px;">1903634</span><span class="t" style="top:370.00px;font-size:12.6px;color:#000000;right:291.80px;">-3639294</span><span class="t" style="top:370.00px;font-size:12.6px;color:#000000;right:227.80px;">3512849</span><span class="t" style="top:370.00px;font-size:12.6px;color:#000000;right:163.80px;">3339504</span><span class="t" style="top:370.00px;font-size:12.6px;color:#000000;right:99.80px;">-8216607</span><span class="t" style="top:390.00px;font-size:12.6px;color:#000000;right:803.80px;">0</span><span class="t" style="top:390.00px;font-size:12.6px;color:#000000;right:739.80px;">0</span><span class="t" style="top:390.00px;font-size:12.6px;color:#000000;right:675.80px;">0</span><span class="t" style="top:390.00px;font-size:12.6px;color:#000000;right:611.80px;">0</span><span class="t" style="top:390.00px;font-size:12.6px;color:#000000;right:547.80px;">0</span><span class="t" style="top:390.00px;font-size:12.6px;color:#000000;right:483.80px;">0</span><span class="t" style="top:390.00px;font-size:12.6px;color:#000000;right:419.80px;">0</span><span class="t" style="top:390.00px;font-size:12.6px;color:#000000;right:355.80px;">600000</span><span class="t" style="top:390.00px;font-size:12.6px;color:#000000;right:291.80px;">300000</span><span class="t" style="top:390.00px;font-size:12.6px;color:#000000;right:227.80px;">300000</span><span class="t" style="top:390.00px;font-size:12.6px;color:#000000;right:163.80px;">0</span><span class="t" style="top:390.00px;font-size:12.6px;color:#000000;right:99.80px;">0</span><span class="t" style="top:410.00px;font-size:12.6px;color:#000000;right:803.80px;">0.02</span><span class="t" style="top:410.00px;font-size:12.6px;color:#000000;right:739.80px;">-298315</span><span class="t" style="top:410.00px;font-size:12.6px;color:#000000;right:675.80px;">-334155</span><span class="t" style="top:410.00px;font-size:12.6px;color:#000000;right:611.80px;">-286720</span><span class="t" style="top:410.00px;font-size:12.6px;color:#000000;right:547.80px;">-302191</span><span class="t" style="top:410.00px;font-size:12.6px;color:#000000;right:483.80px;">-300493</span><span class="t" style="top:410.00px;font-size:12.6px;color:#000000;right:419.80px;">-313354</span><span class="t" style="top:410.00px;font-size:12.6px;color:#000000;right:355.80px;">-297612</span><span class="t" style="top:410.00px;font-size:12.6px;color:#000000;right:291.80px;">-281279</span><span class="t" style="top:410.00px;font-size:12.6px;color:#000000;right:227.80px;">-2106149</span><span class="t" style="top:410.00px;font-size:12.6px;color:#000000;right:163.80px;">-2061013</span><span class="t" style="top:410.00px;font-size:12.6px;color:#000000;right:99.80px;">-2027100</span><span class="t" style="top:430.00px;font-size:12.6px;color:#000000;right:803.80px;">0</span><span class="t" style="top:430.00px;font-size:12.6px;color:#000000;right:739.80px;">0</span><span class="t" style="top:430.00px;font-size:12.6px;color:#000000;right:675.80px;">0</span><span class="t" style="top:430.00px;font-size:12.6px;color:#000000;right:611.80px;">0</span><span class="t" style="top:430.00px;font-size:12.6px;color:#000000;right:547.80px;">0</span><span class="t" style="top:430.00px;font-size:12.6px;color:#000000;right:483.80px;">0</span><span class="t" style="top:430.00px;font-size:12.6px;color:#000000;right:419.80px;">0</span><span class="t" style="top:430.00px;font-size:12.6px;color:#000000;right:355.80px;">0</span><span class="t" style="top:430.00px;font-size:12.6px;color:#000000;right:291.80px;">0</span><span class="t" style="top:430.00px;font-size:12.6px;color:#000000;right:227.80px;">0</span><span class="t" style="top:430.00px;font-size:12.6px;color:#000000;right:163.80px;">0</span><span class="t" style="top:430.00px;font-size:12.6px;color:#000000;right:99.80px;">0</span><span class="t" style="top:450.00px;font-size:12.6px;color:#000000;right:803.80px;">198577.17</span><span class="t" style="top:450.00px;font-size:12.6px;color:#000000;right:739.80px;">64695.49</span><span class="t" style="top:450.00px;font-size:12.6px;color:#000000;right:675.80px;">67635.34</span><span class="t" style="top:450.00px;font-size:12.6px;color:#000000;right:611.80px;">-53175.4</span><span class="t" style="top:450.00px;font-size:12.6px;color:#000000;right:547.80px;">71220.4</span><span class="t" style="top:450.00px;font-size:12.6px;color:#000000;right:483.80px;">69874.1</span><span class="t" style="top:450.00px;font-size:12.6px;color:#000000;right:419.80px;">70212.3</span><span class="t" style="top:450.00px;font-size:12.6px;color:#000000;right:355.80px;">72145.6</span><span class="t" style="top:450.00px;font-size:12.6px;color:#000000;right:291.80px;">73011.9</span><span class="t" style="top:450.00px;font-size:12.6px;color:#000000;right:227.80px;">73544.2</span><span class="t" style="top:450.00px;font-size:12.6px;color:#000000;right:163.80px;">74014.8</span><span class="t" style="top:450.00px;font-size:12.6px;color:#000000;right:99.80px;">74814.8</span><span class="t" style="top:470.00px;font-size:12.6px;color:#000000;right:803.80px;">-11263.94</span><span class="t" style="top:470.00px;font-size:12.6px;color:#000000;right:739.80px;">-11263.9</span><span class="t" style="top:470.00px;font-size:12.6px;color:#000000;right:675.80px;">-11263.9</span><span class="t" style="top:470.00px;font-size:12.6px;color:#000000;right:611.80px;">1254005</span><span class="t" style="top:470.00px;font-size:12.6px;color:#000000;right:547.80px;">0</span><span class="t" style="top:470.00px;font-size:12.6px;color:#000000;right:483.80px;">0</span><span class="t" style="top:470.00px;font-size:12.6px;color:#000000;right:419.80px;">0</span><span class="t" style="top:470.00px;font-size:12.6px;color:#000000;right:355.80px;">0</span><span class="t" style="top:470.00px;font-size:12.6px;color:#000000;right:291.80px;">0</span><span class="t" style="top:470.00px;font-size:12.6px;color:#000000;right:227.80px;">0</span><span class="t" style="top:470.00px;font-size:12.6px;color:#000000;right:163.80px;">0</span><span class="t" style="top:470.00px;font-size:12.6px;color:#000000;right:99.80px;">528201.6</span><span class="t" style="top:490.00px;font-size:12.6px;color:#000000;right:803.80px;">-196014.23</span><span class="t" style="top:490.00px;font-size:12.6px;color:#000000;right:739.80px;">-242192</span><span class="t" style="top:490.00px;font-size:12.6px;color:#000000;right:675.80px;">4901720</span><span class="t" style="top:490.00px;font-size:12.6px;color:#000000;right:611.80px;">-315020</span><span class="t" style="top:490.00px;font-size:12.6px;color:#000000;right:547.80px;">-288104</span><span class="t" style="top:490.00px;font-size:12.6px;color:#000000;right:483.80px;">-301577</span><span class="t" style="top:490.00px;font-size:12.6px;color:#000000;right:419.80px;">-297410</span><span class="t" style="top:490.00px;font-size:12.6px;color:#000000;right:355.80px;">-305112</span><span class="t" style="top:490.00px;font-size:12.6px;color:#000000;right:291.80px;">-2988.1</span><span class="t" style="top:490.00px;font-size:12.6px;color:#000000;right:227.80px;">-15002.3</span><span class="t" style="top:490.00px;font-size:12.6px;color:#000000;right:163.80px;">-15112.7</span><span class="t" style="top:490.00px;font-size:12.6px;color:#000000;right:99.80px;">-15177.1</span><span class="t" style="top:510.00px;font-size:12.6px;color:#000000;right:803.80px;">539.12</span><span class="t" style="top:510.00px;font-size:12.6px;color:#000000;right:739.80px;">0</span><span class="t" style="top:510.00px;font-size:12.6px;color:#000000;right:675.80px;">151100</span><span class="t" style="top:510.00px;font-size:12.6px;color:#000000;right:611.80px;">0</span><span class="t" style="top:510.00px;font-size:12.6px;color:#000000;right:547.80px;">0</span><span class="t" style="top:510.00px;font-size:12.6px;color:#000000;right:483.80px;">0</span><span class="t" style="top:510.00px;font-size:12.6px;color:#000000;right:419.80px;">0</span><span class="t" style="top:510.00px;font-size:12.6px;color:#000000;right:355.80px;">0</span><span class="t" style="top:510.00px;font-size:12.6px;color:#000000;right:291.80px;">0</span><span class="t" style="top:510.00px;font-size:12.6px;color:#000000;right:227.80px;">0</span><span class="t" style="top:510.00px;font-size:12.6px;color:#000000;right:163.80px;">0</span><span class="t" style="top:510.00px;font-size:12.6px;color:#000000;right:99.80px;">-269.56</span><span class="t" style="top:530.00px;font-size:12.6px;color:#000000;right:803.80px;">75000</span><span class="t" style="top:530.00px;font-size:12.6px;color:#000000;right:739.80px;">75000</span><span class="t" style="top:530.00px;font-size:12.6px;color:#000000;right:675.80px;">75000</span><span class="t" style="top:530.00px;font-size:12.6px;color:#000000;right:611.80px;">0</span><span class="t" style="top:530.00px;font-size:12.6px;color:#000000;right:547.80px;">0</span><span class="t" style="top:530.00px;font-size:12.6px;color:#000000;right:483.80px;">0</span><span class="t" style="top:530.00px;font-size:12.6px;color:#000000;right:419.80px;">0</span><span class="t" style="top:530.00px;font-size:12.6px;color:#000000;right:355.80px;">0</span><span class="t" style="top:530.00px;font-size:12.6px;color:#000000;right:291.80px;">0</span><span class="t" style="top:530.00px;font-size:12.6px;color:#000000;right:227.80px;">0</span><span class="t" style="top:530.00px;font-size:12.6px;color:#000000;right:163.80px;">0</span><span class="t" style="top:530.00px;font-size:12.6px;color:#000000;right:99.80px;">0</span><span class="t" style="top:550.00px;font-size:12.6px;color:#000000;right:803.80px;">-1814753.56</span><span class="t" style="top:550.00px;font-size:12.6px;color:#000000;right:739.80px;">-1732789</span><span class="t" style="top:550.00px;font-size:12.6px;color:#000000;right:675.80px;">-4054380</span><span class="t" style="top:550.00px;font-size:12.6px;color:#000000;right:611.80px;">-1205532</span><span class="t" style="top:550.00px;font-size:12.6px;color:#000000;right:547.80px;">3305118</span><span class="t" style="top:550.00px;font-size:12.6px;color:#000000;right:483.80px;">3305772</span><span class="t" style="top:550.00px;font-size:12.6px;color:#000000;right:419.80px;">3306014</span><span class="t" style="top:550.00px;font-size:12.6px;color:#000000;right:355.80px;">3306212</span><span class="t" style="top:550.00px;font-size:12.6px;color:#000000;right:291.80px;">3306390</span><span class="t" style="top:550.00px;font-size:12.6px;color:#000000;right:227.80px;">3306511</span><span class="t" style="top:550.00px;font-size:12.6px;color:#000000;right:163.80px;">3306432</span><span class="t" style="top:550.00px;font-size:12.6px;color:#000000;right:99.80px;">3306696</span><span class="t" style="top:570.00px;font-size:12.6px;color:#000000;right:803.80px;">-133390</span><span class="t" style="top:570.00px;font-size:12.6px;color:#000000;right:739.80px;">-133390</span><span class="t" style="top:570.00px;font-size:12.6px;color:#000000;right:675.80px;">2205610</span><span class="t" style="top:570.00px;font-size:12.6px;color:#000000;right:611.80px;">-133390</span><span class="t" style="top:570.00px;font-size:12.6px;color:#000000;right:547.80px;">-133390</span><span class="t" style="top:570.00px;font-size:12.6px;color:#000000;right:483.80px;">-133390</span><span class="t" style="top:570.00px;font-size:12.6px;color:#000000;right:419.80px;">-133390</span><span class="t" style="top:570.00px;font-size:12.6px;color:#000000;right:355.80px;">-133390</span><span class="t" style="top:570.00px;font-size:12.6px;color:#000000;right:291.80px;">273078</span><span class="t" style="top:570.00px;font-size:12.6px;color:#000000;right:227.80px;">-133390</span><span class="t" style="top:570.00px;font-size:12.6px;color:#000000;right:163.80px;">-133390</span><span class="t" style="top:570.00px;font-size:12.6px;color:#000000;right:99.80px;">-133390</span><span class="t" style="top:590.00px;font-size:12.6px;color:#000000;right:803.80px;">0</span><span class="t" style="top:590.00px;font-size:12.6px;color:#000000;right:739.80px;">0</span><span class="t" style="top:590.00px;font-size:12.6px;color:#000000;right:675.80px;">0</span><span class="t" style="top:590.00px;font-size:12.6px;color:#000000;right:611.80px;">0</span><span class="t" style="top:590.00px;font-size:12.6px;color:#000000;right:547.80px;">0</span><span class="t" style="top:590.00px;font-size:12.6px;color:#000000;right:483.80px;">0</span><span class="t" style="top:590.00px;font-size:12.6px;color:#000000;right:419.80px;">0</span><span class="t" style="top:590.00px;font-size:12.6px;color:#000000;right:355.80px;">0</span><span class="t" style="top:590.00px;font-size:12.6px;color:#000000;right:291.80px;">-12141.6</span><span class="t" style="top:590.00px;font-size:12.6px;color:#000000;right:227.80px;">0</span><span class="t" style="top:590.00px;font-size:12.6px;color:#000000;right:163.80px;">0</span><span class="t" style="top:590.00px;font-size:12.6px;color:#000000;right:99.80px;">0</span>

<div class="b" style="left:661px;top:430px;width:472px;height:150px;background:#8ec9fa;border:1px solid #39434e;box-sizing:border-box;"></div>
<div class="b" style="left:1093px;top:431px;width:34px;height:21px;background:#c65a4f;box-sizing:border-box;border:1px solid #8f4238;border-top:none;"></div>
<span class="b" style="left:1106.2px;top:430.5px;font-size:16px;font-weight:bold;line-height:20px;color:#000;">x</span>
<div class="b" style="left:669px;top:461px;width:456.5px;height:112px;background:#f0f0f0;"></div>
<div class="b" style="left:773px;top:477px;width:318px;height:20px;background:#fff;box-sizing:border-box;border-top:2px solid #6d6d6d;border-left:2px solid #6d6d6d;border-right:1px solid #e3e3e3;border-bottom:1px solid #e3e3e3;"></div>
<div class="b" style="left:784.5px;top:481px;width:42.5px;height:12.6px;background:#99c9ff;"></div>
<div class="b" style="left:1074px;top:478px;width:17px;height:18px;background:#f0f0f0;box-sizing:border-box;border-top:1px solid #fff;border-left:1px solid #fff;border-right:1px solid #696969;border-bottom:1px solid #696969;box-shadow:inset -1px -1px 0 0 #a0a0a0;"></div>
<svg class="b" style="left:1078.3px;top:485px" width="8" height="5"><path d="M0 0 L8 0 L4 4.5 Z" fill="#000"/></svg>
<div class="b btn" style="left:925px;top:533px;width:88px;height:31px;"></div>
<div class="b btn" style="left:1029px;top:533px;width:88px;height:31px;"></div>

<span class="t" style="top:435.50px;font-size:15px;color:#000000;left:847.30px;letter-spacing:-0.047px;">Reporting Tree</span><span class="t" style="top:482.00px;font-size:11px;color:#000000;left:683.60px;letter-spacing:-0.006px;">Reporting Tree</span><span class="t" style="top:478.00px;font-size:11px;color:#0a0a3c;left:784.62px;letter-spacing:0.278px;">Territory</span><span class="t" style="top:538.50px;font-size:11px;color:#000000;left:961.07px;letter-spacing:-0.330px;">Ok</span><span class="t" style="top:538.50px;font-size:11px;color:#000000;left:1055.53px;letter-spacing:-0.340px;">Cancel</span>

<svg class="b" style="left:0;top:0" width="1315" height="609" fill="none">
<rect x="941" y="77" width="105" height="25.8" stroke="#ff0000" stroke-width="4"/>
<path d="M939.5 92.6 L933.5 96.0 L927.4 99.4 L921.4 102.8 L915.3 106.2 L909.2 109.5 L903.1 112.8 L897.0 116.1 L890.9 119.4 L884.8 122.7 L878.7 126.0 L872.5 129.2 L866.4 132.5 L860.3 135.7 L854.1 138.9 L848.0 142.1 L841.8 145.3 L835.6 148.5 L829.5 151.7 L823.3 154.9 L817.1 158.1 L811.0 161.2 L804.8 164.4 L798.6 167.5 L792.4 170.7 L786.2 173.8 L780.1 177.0 L773.9 180.1 L767.7 183.3 L761.5 186.4 L755.3 189.6 L749.1 192.7 L742.9 195.9 L736.8 199.1 L730.6 202.2 L724.4 205.4 L718.2 208.6 L712.1 211.8 L705.9 215.0 L699.7 218.2 L693.6 221.4 L687.4 224.7 L681.3 227.9 L675.2 231.3 L669.2 234.6 L663.1 238.1 L657.2 241.6 L651.2 245.1 L645.4 248.8 L639.6 252.5 L633.8 256.3 L628.2 260.3 L622.6 264.3 L617.0 268.5 L611.6 272.8 L606.1 277.2 L600.8 281.8 L595.5 286.5 L590.3 291.4 L585.4 296.4 L581.0 301.8 L577.3 307.7 L574.6 313.9 L573.0 320.5 L572.4 327.1 L573.0 333.8 L574.7 340.2 L577.6 346.2 L581.4 352.0 L586.0 357.4 L591.1 362.6 L596.4 367.5 L601.8 372.2 L607.3 376.8 L612.7 381.2 L618.2 385.4 L623.8 389.5 L629.4 393.5 L635.0 397.4 L640.8 401.2 L646.5 404.9 L652.4 408.5 L658.3 412.1 L664.2 415.6 L670.2 419.1 L676.2 422.6 L682.3 425.9 L688.4 429.3 L694.5 432.6 L700.7 435.9 L706.8 439.2 L713.0 442.4 L719.1 445.7 L725.3 448.9 L731.5 452.2 L737.6 455.4 L743.7 458.6 L749.8 461.9 L755.9 465.2 L761.9 468.5" stroke="#ff0000" stroke-width="3.5" stroke-linejoin="round"/>
<path d="M773.4 475.8 L758.2 450 L759.5 465 L744.6 466.6 Z" fill="#ff0000"/>
<ellipse cx="807.2" cy="487.6" rx="35.9" ry="13.9" stroke="#f59d17" stroke-width="3"/>
</svg>

</div></div>
</body></html>
